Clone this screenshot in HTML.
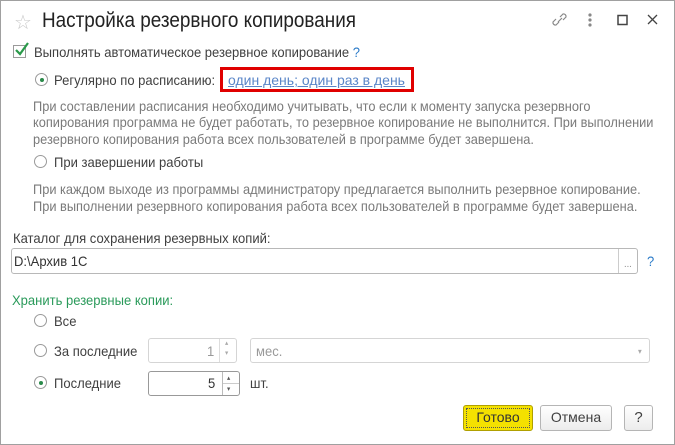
<!DOCTYPE html>
<html><head><meta charset="utf-8"><style>
body{margin:0;width:675px;height:445px;overflow:hidden;background:#fff;font-family:"Liberation Sans",sans-serif;color:#404040;}
.frame{position:absolute;left:0;top:0;width:673px;height:443px;border:1px solid #a0a0a0;}
.t{position:absolute;white-space:nowrap;font-size:14px;transform:scaleX(.93);transform-origin:left top;line-height:16px;}
.g{color:#7a7a7a;font-size:14px;transform:scaleX(.915);}
.r{position:absolute;width:13px;height:13px;border:1px solid #9a9a9a;border-radius:50%;background:#fff;box-sizing:border-box;}
.r.on::after{content:"";position:absolute;left:3.5px;top:3.5px;width:4px;height:4px;border-radius:50%;background:#2a8a4a;}
.box{position:absolute;border:1px solid #b8b8b8;border-radius:3px;background:#fff;box-sizing:border-box;}
.btn{position:absolute;border:1px solid #b5b5b5;border-radius:3px;background:linear-gradient(#fff,#ececec);box-sizing:border-box;font-size:14px;text-align:center;line-height:23px;}
</style></head><body>
<div class="frame"></div>
<div style="position:absolute;left:14px;top:10px;font-size:20px;color:#c8c8c8">☆</div>
<div class="t" style="left:42px;top:9px;font-size:21px;line-height:24px;color:#222;transform:scaleX(.9)">Настройка резервного копирования</div>
<svg style="position:absolute;left:552px;top:11px" width="110" height="18" viewBox="0 0 110 18" fill="none" stroke="#888" stroke-width="1.2">
<path d="M7 11 L4 14 A2.5 2.5 0 0 1 1 11 L4 8 M8 6 L11 3 A2.5 2.5 0 0 1 14 6 L11 9 M6 11 L10 7"/>
<circle cx="38" cy="4" r="1" fill="#888"/><circle cx="38" cy="9" r="1" fill="#888"/><circle cx="38" cy="14" r="1" fill="#888"/>
<rect x="66" y="4.5" width="9" height="9" stroke-width="1.5" stroke="#444"/>
<path d="M96 4 L105 13 M105 4 L96 13" stroke="#444" stroke-width="1.3"/>
</svg>
<div style="position:absolute;left:13px;top:45px;width:13px;height:13px;border:1px solid #9a9a9a;box-sizing:border-box;background:#fff"></div>
<svg style="position:absolute;left:14px;top:41px" width="16" height="16"><path d="M2 9 L6 13 L14 2" stroke="#2a9a4a" stroke-width="2.2" fill="none"/></svg>
<div class="t" style="left:34px;top:44px">Выполнять автоматическое резервное копирование <span style="color:#2a7ac8">?</span></div>
<div class="r on" style="left:35px;top:73px"></div>
<div class="t" style="left:54px;top:72px">Регулярно по расписанию:</div>
<div class="t" style="left:228px;top:72px;color:#5a86c8;text-decoration:underline;transform:scaleX(1)">один день; один раз в день</div>
<div style="position:absolute;left:220px;top:67px;width:194px;height:25px;border:3px solid #e00000;box-sizing:border-box"></div>
<div class="t g" style="left:33px;top:98px">При составлении расписания необходимо учитывать, что если к моменту запуска резервного</div>
<div class="t g" style="left:33px;top:114px">копирования программа не будет работать, то резервное копирование не выполнится. При выполнении</div>
<div class="t g" style="left:33px;top:131px">резервного копирования работа всех пользователей в программе будет завершена.</div>
<div class="r" style="left:34px;top:155px"></div>
<div class="t" style="left:54px;top:154px">При завершении работы</div>
<div class="t g" style="left:33px;top:181px">При каждом выходе из программы администратору предлагается выполнить резервное копирование.</div>
<div class="t g" style="left:33px;top:198px">При выполнении резервного копирования работа всех пользователей в программе будет завершена.</div>
<div class="t" style="left:13px;top:230px">Каталог для сохранения резервных копий:</div>
<div class="box" style="left:11px;top:248px;width:627px;height:26px"></div>
<div style="position:absolute;left:618px;top:249px;width:1px;height:24px;background:#ccc"></div>
<div class="t" style="left:624px;top:257px;font-size:10px;color:#888">...</div>
<div class="t" style="left:14px;top:253px;color:#333">D:\Архив 1С</div>
<div class="t" style="left:647px;top:253px;color:#2a7ac8">?</div>
<div class="t" style="left:12px;top:292px;color:#2a9a5a">Хранить резервные копии:</div>
<div class="r" style="left:34px;top:314px"></div>
<div class="t" style="left:54px;top:313px">Все</div>
<div class="r" style="left:34px;top:344px"></div>
<div class="t" style="left:54px;top:343px">За последние</div>
<div class="box" style="left:148px;top:338px;width:89px;height:25px;border-color:#d5d5d5"></div>
<div style="position:absolute;left:219px;top:339px;width:1px;height:23px;background:#ddd"></div>
<div class="t" style="left:207px;top:343px;color:#999">1</div>
<div class="t" style="left:225px;top:339px;font-size:7px;color:#aaa;line-height:10px">▴<br>▾</div>
<div class="box" style="left:250px;top:338px;width:400px;height:25px;border-color:#d5d5d5"></div>
<div class="t" style="left:256px;top:343px;color:#999">мес.</div>
<div class="t" style="left:638px;top:344px;font-size:8px;color:#aaa">▾</div>
<div class="r on" style="left:34px;top:376px"></div>
<div class="t" style="left:54px;top:375px">Последние</div>
<div class="box" style="left:148px;top:371px;width:92px;height:25px;border-color:#999"></div>
<div style="position:absolute;left:222px;top:372px;width:1px;height:23px;background:#bbb"></div>
<div style="position:absolute;left:223px;top:383px;width:16px;height:1px;background:#ccc"></div>
<div class="t" style="left:208px;top:375px;color:#333">5</div>
<div class="t" style="left:227px;top:373px;font-size:7px;color:#555;line-height:11px">▴<br>▾</div>
<div class="t" style="left:250px;top:375px">шт.</div>
<div class="btn" style="left:463px;top:405px;width:70px;height:26px;background:#f4e100;border-color:#b0a000;color:#333;outline:1px dotted #555;outline-offset:-4px">Готово</div>
<div class="btn" style="left:540px;top:405px;width:72px;height:26px">Отмена</div>
<div class="btn" style="left:624px;top:405px;width:29px;height:26px;font-size:15px">?</div>
</body></html>
